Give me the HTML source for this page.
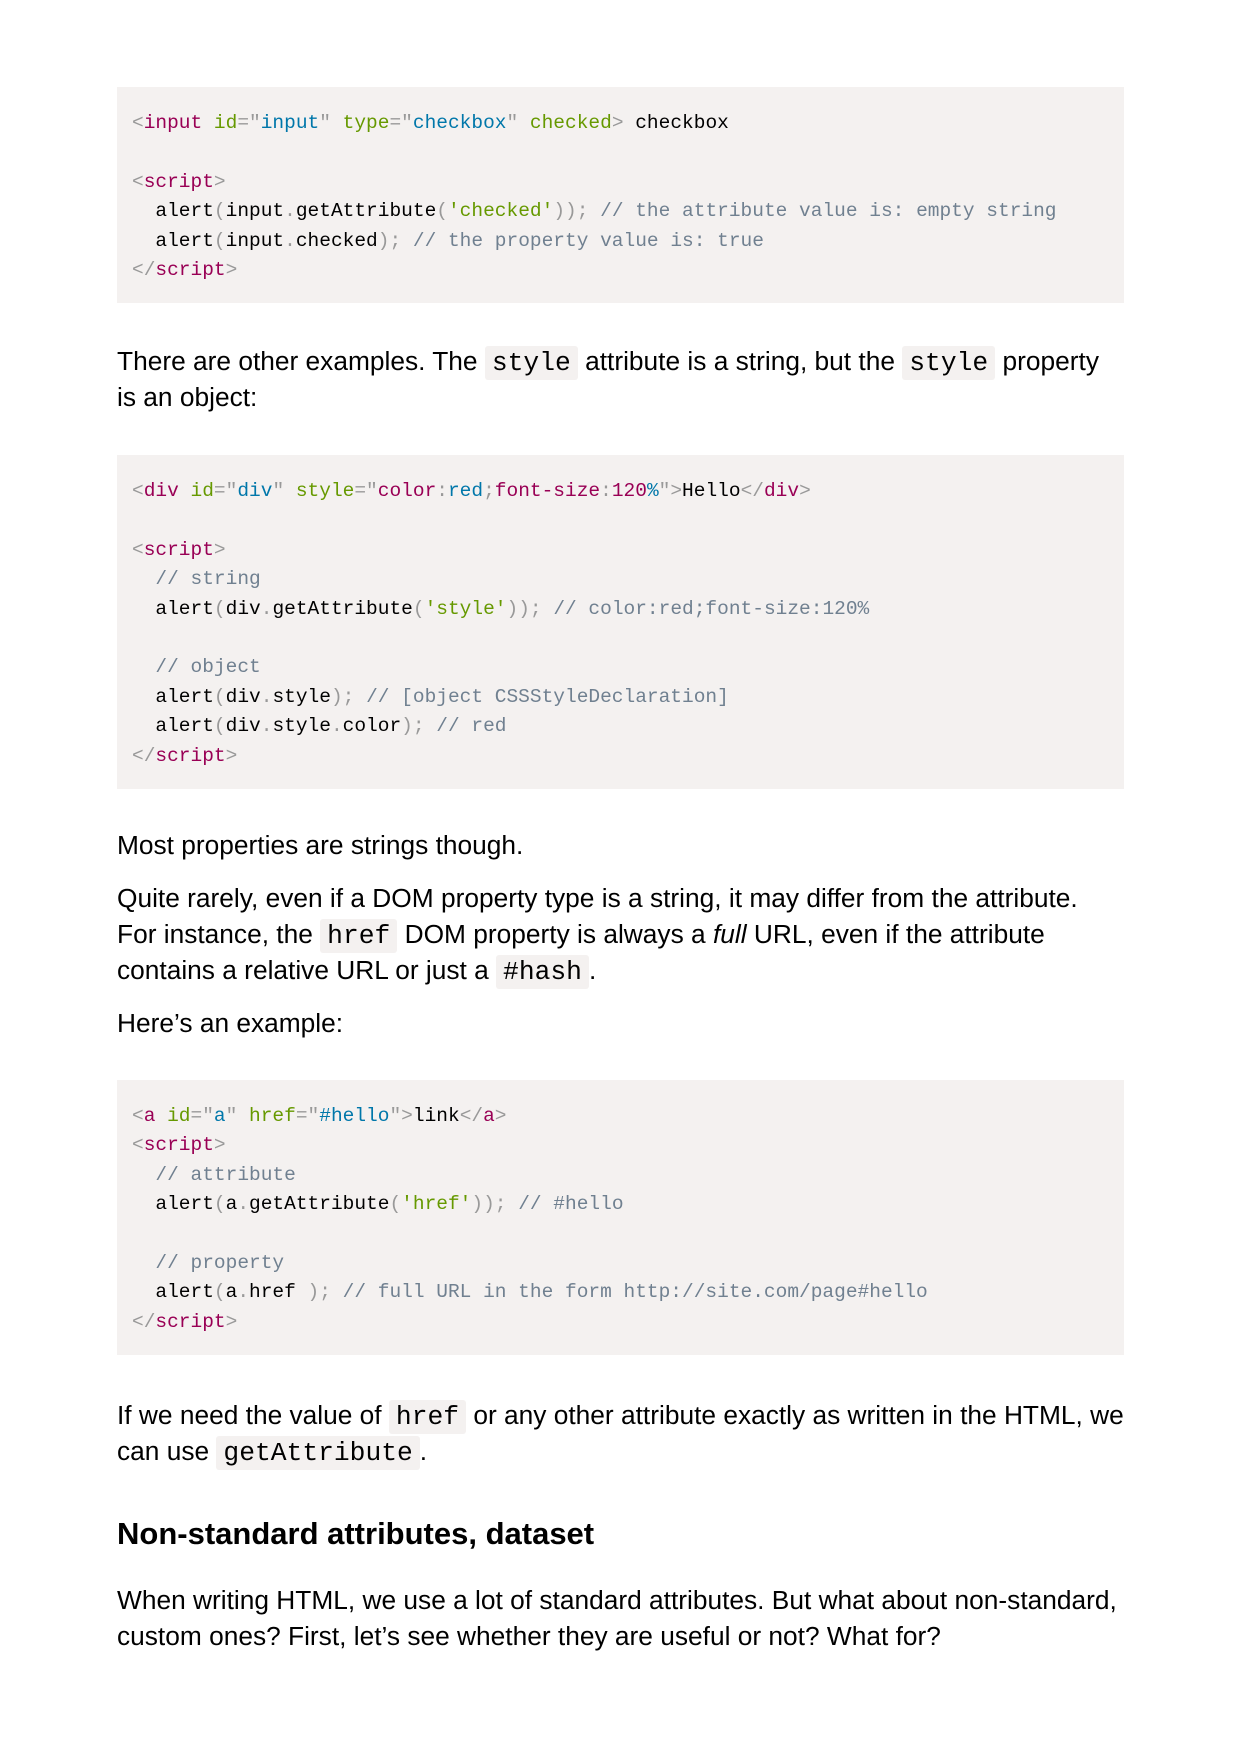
<!DOCTYPE html>
<html><head><meta charset="utf-8"><style>
html,body{margin:0;padding:0;background:#fff;width:1240px;height:1754px;overflow:hidden}
body{position:relative;font-family:"Liberation Sans",Arial,sans-serif;color:#000}
.pre{position:absolute;left:117px;width:977px;background:#f4f1f0;padding:22px 15px 18px;font-family:"Liberation Mono",monospace;font-size:19.5px;line-height:29.4px;white-space:pre;color:#000}
.t{color:#905}.a{color:#690}.v{color:#07a}.p{color:#999}.c{color:#708090}.s{color:#690}
.para{position:absolute;left:117px;width:1007px;font-size:26.3px;line-height:36px}
code{font-family:"Liberation Mono",monospace;font-size:26.3px;line-height:1;background:#f4f1f0;padding:2px 7px;border-radius:3px}
h3{position:absolute;left:117px;margin:0;font-size:31px;line-height:36px;font-weight:bold}
</style></head><body>
<div class="pre" style="top:87px"><span class="p">&lt;</span><span class="t">input</span> <span class="a">id</span><span class="p">="</span><span class="v">input</span><span class="p">"</span> <span class="a">type</span><span class="p">="</span><span class="v">checkbox</span><span class="p">"</span> <span class="a">checked</span><span class="p">&gt;</span> checkbox

<span class="p">&lt;</span><span class="t">script</span><span class="p">&gt;</span>
  alert<span class="p">(</span>input<span class="p">.</span>getAttribute<span class="p">(</span><span class="s">'checked'</span><span class="p">));</span> <span class="c">// the attribute value is: empty string</span>
  alert<span class="p">(</span>input<span class="p">.</span>checked<span class="p">);</span> <span class="c">// the property value is: true</span>
<span class="p">&lt;/</span><span class="t">script</span><span class="p">&gt;</span></div>

<div class="para" style="top:343px">There are other examples. The <code>style</code> attribute is a string, but the <code>style</code> property is an object:</div>

<div class="pre" style="top:455px"><span class="p">&lt;</span><span class="t">div</span> <span class="a">id</span><span class="p">="</span><span class="v">div</span><span class="p">"</span> <span class="a">style</span><span class="p">="</span><span class="t">color</span><span class="p">:</span><span class="v">red</span><span class="p">;</span><span class="t">font-size</span><span class="p">:</span><span class="t">120</span><span class="v">%</span><span class="p">"&gt;</span>Hello<span class="p">&lt;/</span><span class="t">div</span><span class="p">&gt;</span>

<span class="p">&lt;</span><span class="t">script</span><span class="p">&gt;</span>
  <span class="c">// string</span>
  alert<span class="p">(</span>div<span class="p">.</span>getAttribute<span class="p">(</span><span class="s">'style'</span><span class="p">));</span> <span class="c">// color:red;font-size:120%</span>

  <span class="c">// object</span>
  alert<span class="p">(</span>div<span class="p">.</span>style<span class="p">);</span> <span class="c">// [object CSSStyleDeclaration]</span>
  alert<span class="p">(</span>div<span class="p">.</span>style<span class="p">.</span>color<span class="p">);</span> <span class="c">// red</span>
<span class="p">&lt;/</span><span class="t">script</span><span class="p">&gt;</span></div>

<div class="para" style="top:827px">Most properties are strings though.</div>
<div class="para" style="top:880px">Quite rarely, even if a DOM property type is a string, it may differ from the attribute. For instance, the <code>href</code> DOM property is always a <i>full</i> URL, even if the attribute contains a relative URL or just a <code>#hash</code>.</div>
<div class="para" style="top:1005px">Here’s an example:</div>

<div class="pre" style="top:1080px"><span class="p">&lt;</span><span class="t">a</span> <span class="a">id</span><span class="p">="</span><span class="v">a</span><span class="p">"</span> <span class="a">href</span><span class="p">="</span><span class="v">#hello</span><span class="p">"&gt;</span>link<span class="p">&lt;/</span><span class="t">a</span><span class="p">&gt;</span>
<span class="p">&lt;</span><span class="t">script</span><span class="p">&gt;</span>
  <span class="c">// attribute</span>
  alert<span class="p">(</span>a<span class="p">.</span>getAttribute<span class="p">(</span><span class="s">'href'</span><span class="p">));</span> <span class="c">// #hello</span>

  <span class="c">// property</span>
  alert<span class="p">(</span>a<span class="p">.</span>href <span class="p">);</span> <span class="c">// full URL in the form http://site.com/page#hello</span>
<span class="p">&lt;/</span><span class="t">script</span><span class="p">&gt;</span></div>

<div class="para" style="top:1397px">If we need the value of <code>href</code> or any other attribute exactly as written in the HTML, we can use <code>getAttribute</code>.</div>

<h3 style="top:1516px">Non-standard attributes, dataset</h3>

<div class="para" style="top:1582px">When writing HTML, we use a lot of standard attributes. But what about non-standard, custom ones? First, let’s see whether they are useful or not? What for?</div>
</body></html>
